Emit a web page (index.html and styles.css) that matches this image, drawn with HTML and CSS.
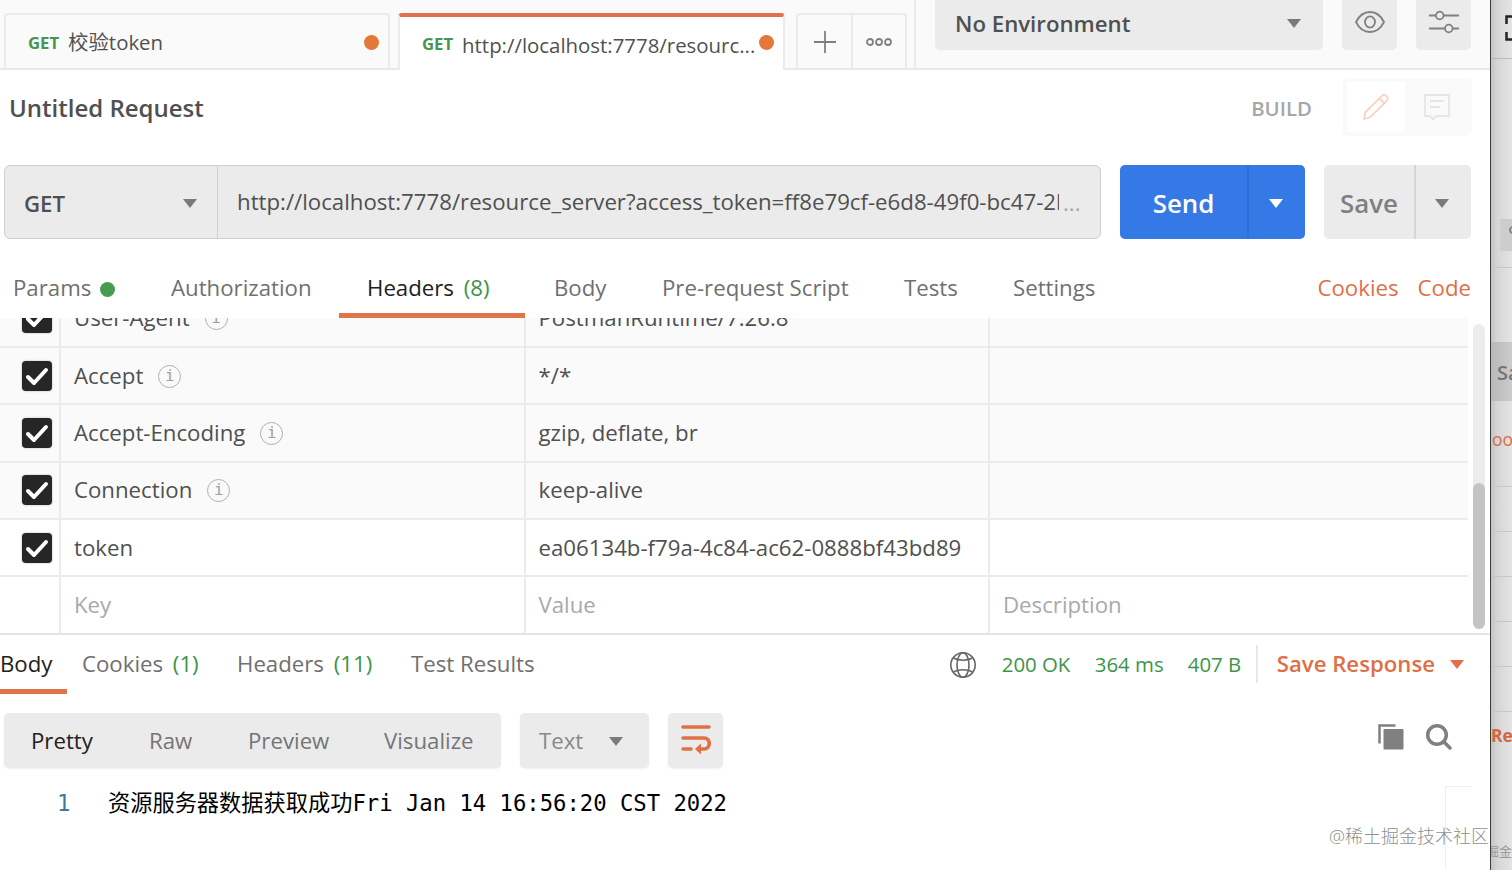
FILE: index.html
```
<!DOCTYPE html>
<html lang="en">
<head>
    <meta charset="UTF-8">
    <meta name="viewport" content="width=device-width, initial-scale=1.0">
    <title>Untitled Request</title>
    <link rel="stylesheet" href="styles.css">
</head>
<body>
    <div class="window">
        <!-- Request tabs and environment -->
        <header class="topbar">
            <div class="tab">
                <span class="tab-method">GET</span>
                <span class="tab-name">校验token</span>
                <span class="unsaved"></span>
            </div>
            <div class="tab tab-active">
                <span class="tab-method">GET</span>
                <span class="tab-name">http://localhost:7778/resourc...</span>
                <span class="unsaved"></span>
            </div>
            <div class="tab-actions">
                <button class="tab-add"><svg width="24" height="24" viewBox="0 0 24 24"><path d="M12 1v22M1 12h22"/></svg></button>
                <button class="tab-more"><svg width="28" height="10" viewBox="0 0 28 10"><circle cx="5" cy="5" r="3"/><circle cx="14" cy="5" r="3"/><circle cx="23" cy="5" r="3"/></svg></button>
            </div>
            <div class="environment">
                <div class="env-select">No Environment <i class="caret"></i></div>
                <button class="env-button">
                    <svg width="32" height="24" viewBox="0 0 32 24"><path d="M2 12C5 6 10 2 16 2s11 4 14 10c-3 6-8 10-14 10S5 18 2 12z"/><ellipse cx="16" cy="12" rx="5" ry="5.6"/></svg>
                </button>
                <button class="env-button">
                    <svg width="32" height="24" viewBox="0 0 32 24"><path d="M1 5.500h7M15.500 5.500H31M1 18.500h16M24.500 18.500H31"/><circle cx="11.700" cy="5.500" r="3.800"/><circle cx="20.800" cy="18.500" r="3.800"/></svg>
                </button>
            </div>
        </header>

        <section class="title-row">
            <h1>Untitled Request</h1>
            <span class="build">BUILD</span>
            <div class="mode-switch">
                <span class="mode mode-active">
                    <svg width="28" height="28" viewBox="0 0 28 28"><path d="M2 26l1.500-7L20 2.800c3.200-2.600 7.400 1.600 4.900 4.900L8.500 24z M17.500 5.500l5 5"/></svg>
                </span>
                <span class="mode">
                    <svg width="28" height="28" viewBox="0 0 28 28"><path d="M2 2h24v21H13l-3 3.500L7 23H2zM7 8h14M7 14h10"/></svg>
                </span>
            </div>
        </section>

        <section class="url-row">
            <div class="url-box">
                <div class="method">GET <i class="caret"></i></div>
                <div class="url">
                    <span class="url-text">http://localhost:7778/resource_server?access_token=ff8e79cf-e6d8-49f0-bc47-2b</span>
                    <span class="url-more">...</span>
                </div>
            </div>
            <div class="send">
                <button class="send-main">Send</button>
                <button class="send-drop"><i class="caret"></i></button>
            </div>
            <div class="save">
                <button class="save-main">Save</button>
                <button class="save-drop"><i class="caret"></i></button>
            </div>
        </section>

        <nav class="request-tabs">
            <a class="params">Params <i class="dot"></i></a>
            <a class="auth">Authorization</a>
            <a class="headers active">Headers <em>(8)</em></a>
            <a class="body-tab">Body</a>
            <a class="script">Pre-request Script</a>
            <a class="tests">Tests</a>
            <a class="settings">Settings</a>
            <a class="link cookies">Cookies</a>
            <a class="link">Code</a>
        </nav>

        <!-- Headers table, scrolled to the end -->
        <section class="headers-panel">
            <div class="headers-table">
                <div class="row auto">
                    <div class="check"><span class="checkbox"><svg width="30" height="30" viewBox="0 0 30 30"><path d="M6 16l6 6L24 9"/></svg></span></div>
                    <div class="key">User-Agent <i class="info">i</i></div>
                    <div class="value">PostmanRuntime/7.26.8</div>
                    <div class="desc"></div>
                </div>
                <div class="row auto">
                    <div class="check"><span class="checkbox"><svg width="30" height="30" viewBox="0 0 30 30"><path d="M6 16l6 6L24 9"/></svg></span></div>
                    <div class="key">Accept <i class="info">i</i></div>
                    <div class="value">*/*</div>
                    <div class="desc"></div>
                </div>
                <div class="row auto">
                    <div class="check"><span class="checkbox"><svg width="30" height="30" viewBox="0 0 30 30"><path d="M6 16l6 6L24 9"/></svg></span></div>
                    <div class="key">Accept-Encoding <i class="info">i</i></div>
                    <div class="value">gzip, deflate, br</div>
                    <div class="desc"></div>
                </div>
                <div class="row auto">
                    <div class="check"><span class="checkbox"><svg width="30" height="30" viewBox="0 0 30 30"><path d="M6 16l6 6L24 9"/></svg></span></div>
                    <div class="key">Connection <i class="info">i</i></div>
                    <div class="value">keep-alive</div>
                    <div class="desc"></div>
                </div>
                <div class="row">
                    <div class="check"><span class="checkbox"><svg width="30" height="30" viewBox="0 0 30 30"><path d="M6 16l6 6L24 9"/></svg></span></div>
                    <div class="key">token</div>
                    <div class="value">ea06134b-f79a-4c84-ac62-0888bf43bd89</div>
                    <div class="desc"></div>
                </div>
                <div class="row placeholder">
                    <div class="check"></div>
                    <div class="key">Key</div>
                    <div class="value">Value</div>
                    <div class="desc">Description</div>
                </div>
            </div>
            <div class="scrollbar"><div class="thumb"></div></div>
        </section>

        <!-- Response -->
        <section class="response-bar">
            <a class="res-body active">Body</a>
            <a class="res-cookies">Cookies <em>(1)</em></a>
            <a class="res-headers">Headers <em>(11)</em></a>
            <a class="res-tests">Test Results</a>
            <div class="status">
                <svg class="globe" width="28" height="28" viewBox="0 0 28 28"><circle cx="14" cy="14" r="12.200"/><ellipse cx="14" cy="14" rx="6" ry="12.200"/><path d="M4.500 7c5 3 14 3 19 0M4.500 21c5-3 14-3 19 0"/></svg>
                <span class="code">200 OK</span>
                <span class="time">364 ms</span>
                <span class="size">407 B</span>
                <span class="save-response">Save Response <i class="caret"></i></span>
            </div>
        </section>

        <section class="response-tools">
            <div class="view-modes">
                <span class="pretty selected">Pretty</span>
                <span class="raw">Raw</span>
                <span class="preview">Preview</span>
                <span class="visualize">Visualize</span>
            </div>
            <div class="format">Text <i class="caret"></i></div>
            <button class="wrap">
                <svg width="32" height="32" viewBox="0 0 32 32"><path d="M3 4h26M3 15h21c7 0 7 11 0 11h-4M3 26h8"/><path class="head" d="M15 26l6-5.500v11z"/></svg>
            </button>
            <div class="tool-icons">
                <svg width="28" height="28" viewBox="0 0 28 28"><path class="back" d="M2.500 20.500V2.500h16"/><rect x="6.500" y="6" width="20" height="20.500" rx="1"/></svg>
                <svg class="search" width="28" height="28" viewBox="0 0 28 28"><circle cx="12" cy="12" r="9.300"/><path d="M18.500 18.500l6.500 6.500"/></svg>
            </div>
        </section>

        <section class="response-body">
            <span class="line-number">1</span>
            <code>资源服务器数据获取成功Fri Jan 14 16:56:20 CST 2022</code>
            <div class="minimap"></div>
        </section>
        <div class="watermark">@稀土掘金技术社区</div>
    </div>

    <!-- Edge of the window behind -->
    <aside class="behind">
        <div class="behind-top"><svg width="8" height="26" viewBox="0 0 8 26"><path d="M8 1.500H1.500V9M1.500 17v7.500H8"/></svg></div>
        <div class="behind-tabs"><span class="chip"><svg width="8" height="10" viewBox="0 0 8 10"><circle cx="5" cy="5" r="3"/></svg></span></div>
        <div class="behind-title"></div>
        <div class="behind-save">Sa</div>
        <div class="behind-link">oo</div>
        <div class="behind-row"></div>
        <div class="behind-row"></div>
        <div class="behind-row"></div>
        <div class="behind-row"></div>
        <div class="behind-row"></div>
        <div class="behind-response">Re</div>
        <div class="behind-mark">掘金</div>
    </aside>
</body>
</html>
```
FILE: styles.css
```
* {
    box-sizing: border-box;
}

body {
    margin: 0;
    width: 1512px;
    height: 870px;
    display: flex;
    overflow: hidden;
    background: #d9d9d9;
    color: #505050;
    font-family: "Open Sans", "Noto Sans CJK SC", sans-serif;
    font-size: 22.220px;
    line-height: 30px;
    white-space: nowrap;
}

button {
    padding: 0;
    border: none;
    background: none;
    font: inherit;
    color: inherit;
    display: flex;
    align-items: center;
    justify-content: center;
}

svg {
    display: block;
    flex: none;
    fill: none;
    stroke: #808080;
    stroke-width: 1.800;
}

em {
    font-style: normal;
    color: #3d9448;
    margin-left: 4px;
}

.caret {
    display: inline-block;
    flex: none;
    border: 7.5px solid transparent;
    border-top: 9px solid #7a7a7a;
    border-bottom: 0;
}

.window {
    width: 1491px;
    height: 870px;
    flex: none;
    display: flex;
    flex-direction: column;
    background: #fff;
    border-right: 1px solid #3c3c3c;
    position: relative;
}

/* Top bar */
.topbar {
    height: 70px;
    flex: none;
    display: flex;
    align-items: flex-end;
    padding-left: 4px;
    background: #fafafa;
    box-shadow: inset 0 -2px #e9e9e9;
}

.tab {
    width: 386px;
    height: 57px;
    margin-right: 8px;
    padding: 0 9px 0 22px;
    display: flex;
    align-items: center;
    border: 2px solid #ebebeb;
    border-bottom-color: #e9e9e9;
    border-radius: 4px 4px 0 0;
    font-size: 20.400px;
}

.tab-active {
    width: 387px;
    margin-right: 11px;
    background: #fff;
    border-top: 4px solid #e2704a;
    border-bottom: none;
}

.tab-method {
    font-size: 16.700px;
    font-weight: 700;
    color: #45964f;
    padding-top: 3px;
    margin-right: 9px;
}

.tab-active .tab-method {
    padding-top: 1px;
}

.tab-active .tab-name {
    padding-top: 2px;
}

.unsaved {
    width: 15px;
    height: 15px;
    margin: 1px 0 0 auto;
    border-radius: 50%;
    background: #e37839;
}

.tab-active .unsaved {
    margin-top: -2px;
}

.tab-actions {
    width: 111px;
    height: 57px;
    display: flex;
    border: 2px solid #ebebeb;
    border-bottom-color: #e9e9e9;
    border-radius: 4px 4px 0 0;
}

.tab-add {
    width: 55px;
    border-right: 2px solid #ebebeb;
}

.tab-more {
    flex: 1;
}

.environment {
    height: 70px;
    flex: 1;
    margin-left: 7px;
    padding-left: 19px;
    display: flex;
    align-items: flex-start;
    gap: 19px;
    border-left: 2px solid #ebebeb;
}

.env-select {
    width: 388px;
    height: 50px;
    padding: 0 22px 3px 20px;
    display: flex;
    align-items: center;
    justify-content: space-between;
    background: #ebebeb;
    border-radius: 0 0 5px 5px;
    font-weight: 600;
}

.env-button {
    width: 55px;
    height: 50px;
    padding-bottom: 6px;
    background: #ebebeb;
    border-radius: 0 0 5px 5px;
}

/* Title */
.title-row {
    height: 95px;
    flex: none;
    display: flex;
    align-items: flex-start;
    padding: 8px 18px 0 9px;
}

.title-row h1 {
    margin: 15px auto 0 0;
    font-size: 24px;
    line-height: 30px;
    font-weight: 600;
}

.build {
    margin: 15px 31px 0 0;
    font-size: 20.400px;
    font-weight: 600;
    color: #a6a6a6;
}

.mode-switch {
    width: 129px;
    height: 58px;
    padding: 4px;
    display: flex;
    background: #fafafa;
    border-radius: 5px;
}

.mode {
    flex: 1;
    height: 50px;
    display: flex;
    align-items: center;
    justify-content: center;
}

.mode svg {
    stroke: #e6e6e6;
}

.mode-active {
    flex: 0 0 58px;
    background: #fff;
}

.mode-active svg {
    stroke: #f8d3c3;
}

/* Url */
.url-row {
    height: 74px;
    flex: none;
    display: flex;
    gap: 19px;
    padding-left: 4px;
}

.url-box {
    width: 1097px;
    display: flex;
    background: #ebebeb;
    border: 1.500px solid #cfcfcf;
    border-radius: 6px;
}

.method {
    width: 213px;
    padding: 3px 20px 0 19px;
    display: flex;
    align-items: center;
    justify-content: space-between;
    border-right: 1.500px solid #cfcfcf;
    font-weight: 600;
}

.url {
    padding-left: 19px;
    display: flex;
    align-items: center;
}

.url-text {
    width: 822px;
    padding-bottom: 1px;
    overflow: hidden;
}

.url-more {
    margin-left: 4px;
    padding-top: 2px;
    color: #a6a6a6;
}

.send,
.save {
    display: flex;
    border-radius: 5px;
    font-size: 25.900px;
    font-weight: 600;
    overflow: hidden;
}

.send button,
.save button {
    padding-top: 2px;
}

.send {
    width: 185px;
    background: #3579e6;
    color: #fff;
}

.send .send-main {
    width: 127px;
}

.send .send-drop {
    flex: 1;
    padding-right: 3px;
    border-left: 2px solid #316fd6;
}

.send .caret {
    border-top-color: #fff;
}

.save {
    width: 147px;
    background: #ebebeb;
    color: #808080;
}

.save .save-main {
    width: 90px;
}

.save .save-drop {
    flex: 1;
    padding-right: 3px;
    border-left: 2px solid #d6d6d6;
}

/* Request tabs */
.request-tabs {
    height: 79px;
    flex: none;
    display: flex;
    padding: 34px 19px 0 13px;
    color: #707070;
}

.params { width: 158px; }
.auth { width: 168px; }
.body-tab { width: 108px; margin-left: 29px; }
.script { width: 242px; }
.tests { width: 109px; }

.request-tabs .active {
    width: 186px;
    padding-left: 28px;
    border-bottom: 5px solid #e2744a;
    color: #212121;
}

.dot {
    display: inline-block;
    width: 15px;
    height: 15px;
    margin-left: 3px;
    border-radius: 50%;
    background: #4a9b52;
    vertical-align: -1px;
}

.request-tabs .link {
    color: #df6f45;
}

.cookies {
    margin: 0 19px 0 auto;
}

/* Headers table */
.headers-panel {
    height: 317px;
    flex: none;
    display: flex;
    border-bottom: 2px solid #e4e4e4;
    overflow: hidden;
}

.headers-table {
    width: 1468px;
    margin-top: -27.500px;
}

.row {
    height: 57.400px;
    display: grid;
    grid-template-columns: 61px 464.500px 464.500px 1fr;
    border-bottom: 2px solid #ebebeb;
}

.row.auto {
    background: #fafafa;
}

.row > div {
    display: flex;
    align-items: center;
    padding-left: 13px;
    border-right: 2px solid #ebebeb;
}

.row > .desc {
    border-right: none;
}

.row > .check {
    padding-left: 22px;
}

.row.placeholder {
    height: 56px;
    color: #a9a9a9;
    border-bottom: none;
}

.checkbox {
    width: 30px;
    height: 30px;
    flex: none;
    border-radius: 4px;
    background: #262626;
    box-shadow: 0 0 2px #aaa;
}

.checkbox svg {
    stroke: #fff;
    stroke-width: 4;
    stroke-linecap: round;
    stroke-linejoin: round;
}

.info {
    width: 23px;
    height: 23px;
    margin: 1px 0 0 15px;
    border: 1.500px solid #b0b0b0;
    border-radius: 50%;
    color: #a0a0a0;
    font: 16px/20px "DejaVu Sans Mono", monospace;
    text-align: center;
}

.scrollbar {
    width: 12px;
    height: 305px;
    margin: 6px 0 0 5px;
    display: flex;
    align-items: flex-end;
    border-radius: 6px;
    background: #ececec;
}

.thumb {
    width: 12px;
    height: 146px;
    border-radius: 6px;
    background: #c4c4c4;
}

/* Response */
.response-bar {
    height: 59px;
    flex: none;
    display: flex;
    padding-top: 14px;
    color: #707070;
}

.response-bar .active {
    width: 67px;
    border-bottom: 5px solid #e2744a;
    color: #212121;
}

.res-cookies { width: 155px; margin-left: 15px; }
.res-headers { width: 174px; }

.status {
    flex: 1;
    height: 30px;
    display: flex;
    align-items: center;
    justify-content: flex-end;
    padding-right: 26px;
    font-size: 20.400px;
    color: #3d9448;
}

.globe {
    stroke: #666;
    stroke-width: 1.600;
    margin: 1px 25px 0 0;
}

.code { width: 93px; }
.time { width: 93px; }
.size { width: 68px; }

.save-response {
    height: 38px;
    padding-left: 19px;
    display: flex;
    align-items: center;
    gap: 15px;
    border-left: 2px solid #e9e9e9;
    font-size: 22.200px;
    font-weight: 600;
    color: #df6f45;
}

.save-response .caret {
    border-top-color: #e2704a;
}

.response-tools {
    height: 55px;
    flex: none;
    margin-top: 19px;
    padding-left: 4px;
    display: flex;
    gap: 19px;
}

.view-modes,
.format,
.wrap {
    background: #ebebeb;
    border-radius: 5px;
    display: flex;
    align-items: center;
    box-shadow: 0 1px 2px #f0f0f0;
}

.view-modes {
    width: 497px;
    padding: 1px 0 0 27px;
    color: #757575;
}

.selected { color: #212121; }
.pretty { width: 118px; }
.raw { width: 99px; }
.preview { width: 136px; }

.format {
    width: 129px;
    padding: 1px 0 0 19px;
    gap: 26px;
    color: #888;
}

.wrap {
    width: 55px;
    padding-bottom: 3px;
}

.wrap svg {
    stroke: #df7245;
    stroke-width: 3.600;
    stroke-linecap: round;
}

.wrap .head {
    fill: #df7245;
    stroke: none;
}

.tool-icons {
    margin: 10px 37px 0 auto;
    display: flex;
    gap: 20px;
}

.tool-icons .back {
    stroke-width: 2.500;
}

.tool-icons rect {
    fill: #808080;
    stroke: none;
}

.tool-icons .search {
    stroke-width: 3.500;
    stroke-linecap: round;
}

.response-body {
    flex: 1;
    display: flex;
    padding-top: 20px;
    font-family: "DejaVu Sans Mono", "Noto Sans CJK SC", monospace;
    color: #000;
}

.line-number {
    width: 108px;
    padding-left: 57px;
    color: #3d7a9c;
}

.response-body code {
    font-family: inherit;
}

.minimap {
    width: 26px;
    margin: -2px 19px 0 auto;
    border: solid #efefef;
    border-width: 1px 0 0 1px;
}

.watermark {
    position: absolute;
    right: 1px;
    bottom: 19px;
    font-size: 18px;
    font-weight: 300;
    line-height: 30px;
    color: #8f8f8f;
}

/* Window behind */
.behind {
    width: 21px;
    flex: none;
    overflow: hidden;
    background: linear-gradient(90deg, #c4c4c4, #d6d6d6 30%, #e4e4e4);
}

.behind-top {
    height: 59px;
    padding: 15px 0 0 14px;
    border-bottom: 1px solid #b9b9b9;
}

.behind-top svg {
    stroke: #222;
    stroke-width: 2.500;
}

.behind-tabs {
    height: 209px;
    padding: 160px 0 0 9px;
    border-bottom: 1px solid #c6c6c6;
}

.chip {
    display: block;
    height: 32px;
    padding: 6px 0 0 8px;
    background: #cdcdcd;
}

.behind-title {
    height: 74px;
}

.behind-save {
    height: 59px;
    padding-left: 6px;
    background: linear-gradient(90deg, #b8b8b8, #cbcbcb);
    font-size: 20px;
    font-weight: 600;
    line-height: 61px;
    color: #747474;
}

.behind-link {
    height: 86px;
    padding: 23px 0 0 1px;
    border-bottom: 1px solid #c6c6c6;
    font-size: 17.500px;
    color: #d46f48;
}

.behind-row {
    height: 45px;
    border-bottom: 1px solid #c6c6c6;
}

.behind-response {
    height: 126px;
    padding-top: 8px;
    font-size: 17.500px;
    font-weight: 700;
    color: #cf6740;
}

.behind-mark {
    margin-left: -5px;
    font-size: 13px;
    line-height: 26px;
    color: #9a9a9a;
}
```
